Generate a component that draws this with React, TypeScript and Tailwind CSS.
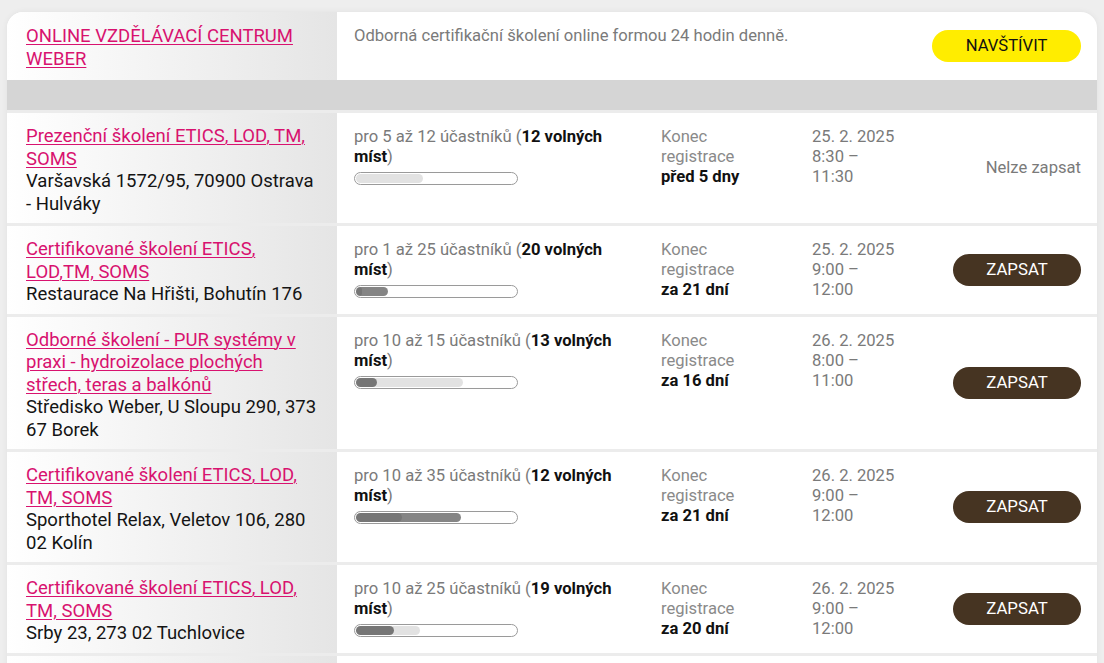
import React from 'react';

interface Course {
  title: string;
  place: string;
  min: number;
  max: number;
  free: number;
  deadline: string;
  date: string;
  from: string;
  to: string;
  open: boolean;
}

const COURSES: Course[] = [
  {
    title: 'Prezenční školení ETICS, LOD, TM, SOMS',
    place: 'Varšavská 1572/95, 70900 Ostrava - Hulváky',
    min: 5,
    max: 12,
    free: 12,
    deadline: 'před 5 dny',
    date: '25. 2. 2025',
    from: '8:30',
    to: '11:30',
    open: false,
  },
  {
    title: 'Certifikované školení ETICS, LOD,TM, SOMS',
    place: 'Restaurace Na Hřišti, Bohutín 176',
    min: 1,
    max: 25,
    free: 20,
    deadline: 'za 21 dní',
    date: '25. 2. 2025',
    from: '9:00',
    to: '12:00',
    open: true,
  },
  {
    title: 'Odborné školení - PUR systémy v praxi - hydroizolace plochých střech, teras a balkónů',
    place: 'Středisko Weber, U Sloupu 290, 373 67 Borek',
    min: 10,
    max: 15,
    free: 13,
    deadline: 'za 16 dní',
    date: '26. 2. 2025',
    from: '8:00',
    to: '11:00',
    open: true,
  },
  {
    title: 'Certifikované školení ETICS, LOD, TM, SOMS',
    place: 'Sporthotel Relax, Veletov 106, 280 02 Kolín',
    min: 10,
    max: 35,
    free: 12,
    deadline: 'za 21 dní',
    date: '26. 2. 2025',
    from: '9:00',
    to: '12:00',
    open: true,
  },
  {
    title: 'Certifikované školení ETICS, LOD, TM, SOMS',
    place: 'Srby 23, 273 02 Tuchlovice',
    min: 10,
    max: 25,
    free: 19,
    deadline: 'za 20 dní',
    date: '26. 2. 2025',
    from: '9:00',
    to: '12:00',
    open: true,
  },
];

// light part = minimum needed, dark part = already registered
const Capacity: React.FC<{ min: number; max: number; free: number }> = ({ min, max, free }) => {
  const taken = max - free;
  return (
    <div className="mt-[5px] w-[164px] h-[13px] rounded-full border border-[#9a9a9a] bg-white p-[1px]">
      <div className="relative h-full w-full">
        <div
          className="absolute left-0 top-0 h-full rounded-full bg-[#e2e2e2]"
          style={{ width: `${(min / max) * 100}%` }}
        />
        {taken > 0 && (
          <div
            className="absolute left-0 top-0 h-full rounded-full bg-[rgba(0,0,0,0.48)]"
            style={{ width: `${(taken / max) * 100}%` }}
          />
        )}
      </div>
    </div>
  );
};

const Row: React.FC<{ c: Course }> = ({ c }) => (
  <div className="flex border-t-[3px] border-[#ececec]">
    <div className="w-[330px] shrink-0 bg-gradient-to-r from-white to-[#e5e5e5] px-[19px] pt-[12px] pb-[8px] text-[18.5px] leading-[22.5px]">
      <a href="#" className="text-[#d8126f] underline underline-offset-2 decoration-1">
        {c.title}
      </a>
      <div className="text-[#141414]">{c.place}</div>
    </div>
    <div className="w-[307px] shrink-0 px-[17px] pt-[14px] text-[16.6px] leading-[20px] text-[#7a7a7a]">
      <div>
        pro {c.min} až {c.max} účastníků (<b className="font-bold text-[#111]">{c.free} volných míst</b>)
      </div>
      <Capacity min={c.min} max={c.max} free={c.free} />
    </div>
    <div className="w-[151px] shrink-0 px-[17px] pt-[14px] text-[16.6px] leading-[20px] text-[#8a8a8a]">
      <div>Konec</div>
      <div>registrace</div>
      <div className="font-bold text-[#111]">{c.deadline}</div>
    </div>
    <div className="w-[130px] shrink-0 px-[17px] pt-[14px] text-[16.6px] leading-[20px] text-[#7a7a7a]">
      <div>{c.date}</div>
      <div>{c.from} –</div>
      <div>{c.to}</div>
    </div>
    <div className="flex flex-1 items-center justify-end pr-[16px]">
      {c.open ? (
        <button className="h-[32px] w-[128px] rounded-full bg-[#463422] text-[16.8px] text-white">
          ZAPSAT
        </button>
      ) : (
        <span className="text-[16.6px] text-[#7a7a7a]">Nelze zapsat</span>
      )}
    </div>
  </div>
);

export default function App() {
  return (
    <div
      className="min-h-screen bg-[#eeeeee] pl-[7px] pr-[7px] pt-[12px]"
      style={{ fontFamily: 'Roboto, "Noto Sans", sans-serif' }}
    >
      <div className="overflow-hidden rounded-t-[16px] bg-white shadow-[0_0_6px_rgba(0,0,0,0.06)]">
        <div className="flex">
          <div className="w-[330px] shrink-0 bg-gradient-to-r from-white to-[#e5e5e5] px-[19px] pt-[13px] pb-[10px] text-[18.5px] leading-[22.5px]">
            <a href="#" className="text-[#d8126f] underline underline-offset-2 decoration-1">
              ONLINE VZDĚLÁVACÍ CENTRUM WEBER
            </a>
          </div>
          <div className="flex-1 px-[17px] pt-[14px] text-[16.6px] leading-[20px] text-[#7a7a7a]">
            Odborná certifikační školení online formou 24 hodin denně.
          </div>
          <div className="flex items-center pr-[16px]">
            <button className="h-[32px] w-[149px] rounded-full bg-[#ffed00] text-[16.6px] text-[#111]">
              NAVŠTÍVIT
            </button>
          </div>
        </div>
        <div className="h-[33px] bg-[#d5d5d5]" />
        <div className="-mt-[3px]">
          {COURSES.map((c, i) => (
            <Row key={i} c={c} />
          ))}
          <div className="flex h-[40px] border-t-[3px] border-[#ececec]">
            <div className="w-[330px] shrink-0 bg-gradient-to-r from-white to-[#e5e5e5]" />
            <div className="flex-1" />
          </div>
        </div>
      </div>
    </div>
  );
}
